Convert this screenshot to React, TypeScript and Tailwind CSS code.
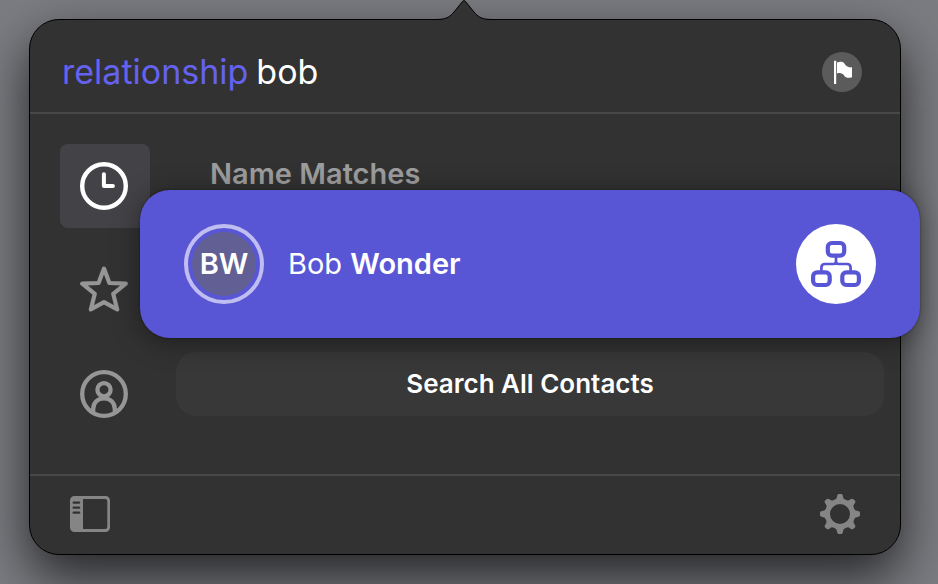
import { useState } from "react";

function ClockIcon() {
  return (
    <svg viewBox="0 0 48 48" className="size-12" fill="none" stroke="currentColor" strokeWidth="4.4" strokeLinecap="round" strokeLinejoin="round" aria-hidden="true">
      <circle cx="24" cy="24" r="21.8" />
      <path d="M23.9 12.2V24h9" strokeWidth="4" />
    </svg>
  );
}

function StarIcon() {
  return (
    <svg viewBox="0 0 48 48" className="size-12" fill="none" stroke="currentColor" strokeWidth="4.2" strokeLinejoin="round" aria-hidden="true">
      <path d="M24 2.6 29.4 17 45.8 17.7 33.2 27.8 37.2 43.4 24 36.1 10.8 43.4 14.8 27.8 2.2 17.7 18.6 17Z" />
    </svg>
  );
}

function PersonIcon() {
  return (
    <svg viewBox="0 0 48 48" className="size-12" fill="none" stroke="currentColor" strokeWidth="4.3" aria-hidden="true">
      <circle cx="24" cy="24" r="21.8" />
      <circle cx="24" cy="19.7" r="6.6" />
      <path d="M13.2 42.2V39c0-6.2 4.6-10.7 10.8-10.7S34.8 32.8 34.8 39v3.2" />
    </svg>
  );
}

function FlagIcon() {
  return (
    <svg viewBox="0 0 40 40" className="size-10" fill="currentColor" aria-hidden="true">
      <rect x="12" y="8.7" width="2.2" height="23.3" rx="0.5" />
      <path d="M15 10.4c2.4-1 5.600-1.100 7.200.9 1.900 3.300 3.900 4.400 7.800 4v9.900c-3.200 1.300-6.500.7-8.100-1.900-1.300-2.100-3.700-3-6.900-1.900Z" />
    </svg>
  );
}

function ChartIcon() {
  return (
    <svg viewBox="0 0 80 80" className="size-20" fill="none" stroke="currentColor" strokeWidth="4.2" aria-hidden="true">
      <rect x="31.8" y="19" width="16.4" height="12.6" rx="4" />
      <rect x="17.1" y="48.4" width="16.6" height="12.6" rx="4" />
      <rect x="46.3" y="48.4" width="16.6" height="12.6" rx="4" />
      <path d="M40 33v4.500c0 1.600-.9 2.500-2.500 2.500H29c-2.400 0-3.600 1.200-3.600 3.600V47M40 37.500c0 1.600.9 2.500 2.500 2.500H51c2.400 0 3.600 1.200 3.600 3.600V47" strokeWidth="2.7" />
    </svg>
  );
}

function SidebarIcon() {
  return (
    <svg viewBox="0 0 40 36" className="h-9 w-10" fill="currentColor" aria-hidden="true">
      <path fillRule="evenodd" d="M4.500 0h31A4.500 4.500 0 0 1 40 4.500v27a4.500 4.500 0 0 1-4.500 4.500h-31A4.500 4.500 0 0 1 0 31.500v-27A4.500 4.500 0 0 1 4.500 0ZM13 3v30h22a2.300 2.300 0 0 0 2.300-2.300V5.300A2.300 2.300 0 0 0 35 3ZM3.600 5.500a1.100 1.100 0 0 0 0 2.200h5.600a1.100 1.100 0 0 0 0-2.200ZM3.600 10.600a1.100 1.100 0 0 0 0 2.200h5.600a1.100 1.100 0 0 0 0-2.200ZM3.600 15.600a1.100 1.100 0 0 0 0 2.200h5.600a1.100 1.100 0 0 0 0-2.200Z" />
    </svg>
  );
}

function GearIcon() {
  return (
    <svg viewBox="-20 -20 40 40" className="size-10" fill="currentColor" aria-hidden="true">
      <circle r="12.6" fill="none" stroke="currentColor" strokeWidth="5.2" />
      {[0, 45, 90, 135, 180, 225, 270, 315].map((angle) => (
        <path key={angle} transform={`rotate(${angle})`} d="M-5.500-13.800C-3.800-14.600-3.300-15.700-2.900-18-2.600-19.400-2-20-1-20H1c1 0 1.600.6 1.900 2 .4 2.300.9 3.400 2.600 4.200Z" />
      ))}
    </svg>
  );
}

const tabs = [
  { id: "recent", label: "Recent", Icon: ClockIcon },
  { id: "favorites", label: "Favorites", Icon: StarIcon },
  { id: "contacts", label: "Contacts", Icon: PersonIcon },
];

export default function App() {
  const [tab, setTab] = useState("recent");
  const [query, setQuery] = useState("bob");

  return (
    <div className="min-h-screen overflow-hidden bg-[#7b7c81] pt-[19px] pr-[37px] pb-[29px] pl-[29px] font-['Inter','Liberation_Sans',sans-serif] text-white">
      <main className="relative rounded-[30px] border border-black bg-[#323232] shadow-[0_22px_52px_rgba(0,0,0,0.7)]">
        <svg viewBox="0 0 62 22" className="absolute -top-[21px] left-1/2 h-[22px] w-[62px] -translate-x-1/2" aria-hidden="true">
          <path d="M2 22V20.500C14 20.500 16 17 20 13L28.500 2.500Q30 .5 31.500 2.500L40 13C44 17 46 20.500 58 20.500V22Z" fill="#323232" />
          <path d="M2 20.500C14 20.500 16 17 20 13L28.500 2.500Q30 .5 31.500 2.500L40 13C44 17 46 20.500 58 20.500" fill="none" stroke="#000" />
        </svg>

        <header className="flex h-[94px] items-center gap-2 border-b-2 border-[#484848] pt-3 pr-[38px] pl-8">
          <label htmlFor="query" className="text-[34px] leading-[44px] text-[#6562f0]">relationship</label>
          <input id="query" value={query} onChange={(e) => setQuery(e.target.value)} className="min-w-0 flex-1 bg-transparent text-[34px] leading-[44px] outline-none" />
          <button aria-label="Flag" className="rounded-full bg-[#5b5b5b]"><FlagIcon /></button>
        </header>

        <div className="flex pt-[30px] pr-4 pb-[38px] pl-[30px]">
          <nav className="flex flex-col gap-5">
            {tabs.map(({ id, label, Icon }) => (
              <button
                key={id}
                aria-label={label}
                onClick={() => setTab(id)}
                className={`flex h-[84px] w-[90px] items-center rounded-lg pl-5 ${tab === id ? "bg-[#434246] text-white" : "text-[#969696]"}`}
              >
                <Icon />
              </button>
            ))}
          </nav>

          <section className="ml-[26px] min-w-0 flex-1 pt-[14px]">
            <h2 className="pl-[34px] text-[29px] leading-8 font-semibold text-[#9d9d9d]">Name Matches</h2>
            <div className="relative -mx-9 flex h-[148px] items-center gap-6 rounded-[30px] bg-[#5956d6] px-11 shadow-[0_4px_28px_rgba(0,0,0,0.4),0_0_2px_rgba(0,0,0,0.5)]">
              <div className="flex size-20 items-center justify-center rounded-full border-4 border-[#c0bdf0] p-1">
                <span className="flex size-16 items-center justify-center rounded-full bg-[#615f94] text-[29px] leading-9 font-semibold">BW</span>
              </div>
              <p className="flex-1 text-[29px] leading-9">Bob <b className="font-semibold">Wonder</b></p>
              <button aria-label="Show relationships" className="rounded-full bg-white text-[#5956d6]"><ChartIcon /></button>
            </div>
            <button className="mt-[14px] h-16 w-full rounded-[20px] bg-[#383838] text-[26px] leading-8 font-semibold">Search All Contacts</button>
          </section>
        </div>

        <footer className="flex h-20 items-center justify-between border-t-2 border-[#484848] px-10 pb-[2px] text-[#858585]">
          <button aria-label="Toggle sidebar"><SidebarIcon /></button>
          <button aria-label="Settings"><GearIcon /></button>
        </footer>
      </main>
    </div>
  );
}
